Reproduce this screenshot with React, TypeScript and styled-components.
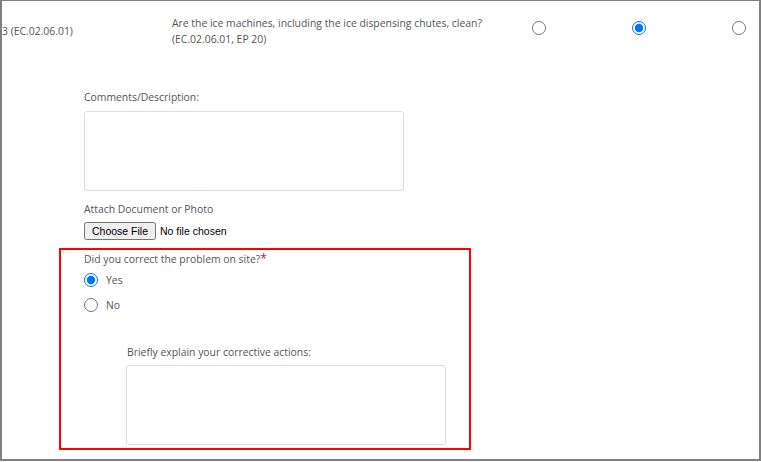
import React, { FC } from 'react';
import styled, { createGlobalStyle } from 'styled-components';

const GlobalStyle = createGlobalStyle`
    html, body {
        margin: 0;
        padding: 0;
        background: #ffffff;
    }

    body {
        font-family: 'Open Sans', 'Liberation Sans', sans-serif;
        font-size: 10.4px;
        color: #555555;
    }
`;

const Frame = styled.div`
    box-sizing: border-box;
    width: 761px;
    height: 461px;
    border: 2px solid #808080;
    border-top-width: 1px;
    overflow: hidden;
`;

const QuestionRow = styled.div`
    display: grid;
    grid-template-columns: 170px 360px 100px 100px 1fr;
    align-items: center;
    padding-top: 14px;
`;

const Code = styled.div`
    white-space: nowrap;
`;

const Question = styled.div`
    line-height: 16px;
`;

const RadioCell = styled.div`
    display: flex;
    align-items: center;
    padding: 0 0 6px 0;
`;

const Radio = styled.input.attrs({ type: 'radio' })`
    margin: 0;
    width: 14px;
    height: 14px;
    accent-color: #0075ff;
`;

const Details = styled.div`
    padding: 43px 0 0 82px;
`;

const Label = styled.div<{ $indent?: number }>`
    line-height: 14px;
    margin-left: ${({ $indent }) => $indent ?? 0}px;
`;

const TextBox = styled.textarea<{ $indent?: number; $gap?: number }>`
    display: block;
    box-sizing: border-box;
    width: 320px;
    height: 80px;
    margin: ${({ $gap }) => $gap ?? 7}px 0 0 ${({ $indent }) => $indent ?? 0}px;
    border: 1px solid #dddddd;
    border-radius: 3px;
    resize: none;
    outline: none;
`;

const AttachLabel = styled(Label)`
    margin-top: 11px;
`;

const FileInput = styled.input.attrs({ type: 'file' })`
    display: block;
    margin-top: 6px;
    font-family: 'Liberation Sans', Arial, sans-serif;
    font-size: 10.5px;
    color: #000000;
`;

const Correction = styled.div`
    box-sizing: border-box;
    width: 412px;
    height: 202px;
    margin: 8px 0 0 -25px;
    padding: 2px 0 0 23px;
    border: 2px solid #ff0000;
`;

const Required = styled.span`
    color: #b3252b;
    font-size: 12px;
`;

const Choice = styled.label`
    display: flex;
    align-items: center;
    gap: 8px;
    height: 14px;
    margin-top: 7px;

    & + & {
        margin-top: 11px;
    }
`;

const Explain = styled(Label)`
    margin-top: 33px;
`;

const App: FC = () => (
    <>
        <GlobalStyle />
        <Frame>
            <QuestionRow>
                <Code>3 (EC.02.06.01)</Code>
                <Question>
                    Are the ice machines, including the ice dispensing chutes, clean?
                    <br />
                    (EC.02.06.01, EP 20)
                </Question>
                <RadioCell>
                    <Radio name="answer" />
                </RadioCell>
                <RadioCell>
                    <Radio name="answer" defaultChecked />
                </RadioCell>
                <RadioCell>
                    <Radio name="answer" />
                </RadioCell>
            </QuestionRow>
            <Details>
                <Label>Comments/Description:</Label>
                <TextBox />
                <AttachLabel>Attach Document or Photo</AttachLabel>
                <FileInput />
                <Correction>
                    <Label>
                        Did you correct the problem on site?<Required>*</Required>
                    </Label>
                    <Choice>
                        <Radio name="corrected" defaultChecked />
                        Yes
                    </Choice>
                    <Choice>
                        <Radio name="corrected" />
                        No
                    </Choice>
                    <Explain $indent={43}>Briefly explain your corrective actions:</Explain>
                    <TextBox $indent={42} $gap={6} />
                </Correction>
            </Details>
        </Frame>
    </>
);

export default App;
